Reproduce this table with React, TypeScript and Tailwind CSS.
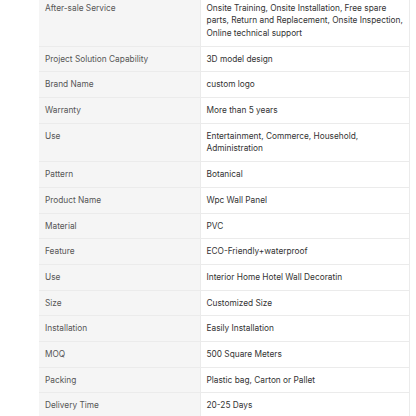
const rows: [string, string][] = [
  ['After-sale Service', 'Onsite Training, Onsite Installation, Free spare parts, Return and Replacement, Onsite Inspection, Online technical support'],
  ['Project Solution Capability', '3D model design'],
  ['Brand Name', 'custom logo'],
  ['Warranty', 'More than 5 years'],
  ['Use', 'Entertainment, Commerce, Household, Administration'],
  ['Pattern', 'Botanical'],
  ['Product Name', 'Wpc Wall Panel'],
  ['Material', 'PVC'],
  ['Feature', 'ECO-Friendly+waterproof'],
  ['Use', 'Interior Home Hotel Wall Decoratin'],
  ['Size', 'Customized Size'],
  ['Installation', 'Easily Installation'],
  ['MOQ', '500 Square Meters'],
  ['Packing', 'Plastic bag, Carton or Pallet'],
  ['Delivery Time', '20-25 Days'],
];

export default function App() {
  return (
    <div className="h-[416px] w-[416px] overflow-hidden bg-white font-['Inter',sans-serif]">
      <table className="ml-[39px] -mt-[4.5px] w-[371px] table-fixed border-collapse text-[8.3px] leading-[12.7px]">
        <colgroup>
          <col className="w-[161px]" />
          <col />
        </colgroup>
        <tbody>
          {rows.map(([label, value], i) => (
            <tr key={i} className="border-b border-[#ebebeb]">
              <td className="bg-[#f5f5f5] px-[6px] py-[6px] align-top text-[#555555]">{label}</td>
              <td className="border-x border-[#ebebeb] px-[6px] py-[6px] align-top text-[#333333]">{value}</td>
            </tr>
          ))}
        </tbody>
      </table>
    </div>
  );
}
